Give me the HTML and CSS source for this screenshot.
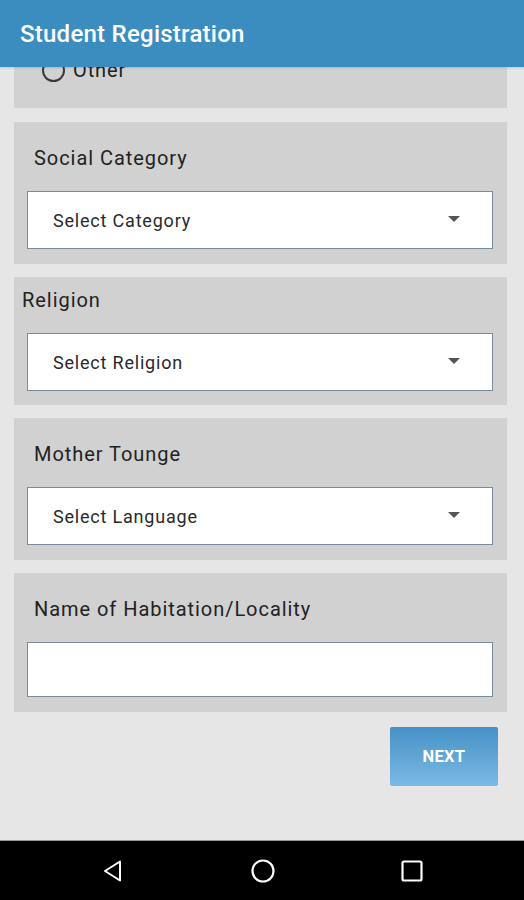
FILE: index.html
```html
<!DOCTYPE html>
<html lang="en">
<head>
  <meta charset="UTF-8">
  <meta name="viewport" content="width=device-width, initial-scale=1.0">
  <title>Student Registration</title>
  <link rel="stylesheet" href="styles.css">
</head>
<body>
  <div class="app">
    <header class="toolbar">
      <h1 class="toolbar-title">Student Registration</h1>
    </header>

    <main class="content">
      <!-- gender card, scrolled mostly out of view -->
      <div class="card card-scrolled">
        <label class="radio-row">
          <span class="radio"></span>
          <span class="radio-text">Other</span>
        </label>
      </div>

      <div class="card">
        <div class="field-label">Social Category</div>
        <div class="select">
          <span class="select-text">Select Category</span>
          <svg class="select-arrow" width="12" height="6" viewBox="0 0 12 6"><path d="M0 0h12L6 6z" fill="#555"/></svg>
        </div>
      </div>

      <div class="card card-tight">
        <div class="field-label label-flush">Religion</div>
        <div class="select">
          <span class="select-text">Select Religion</span>
          <svg class="select-arrow" width="12" height="6" viewBox="0 0 12 6"><path d="M0 0h12L6 6z" fill="#555"/></svg>
        </div>
      </div>

      <div class="card">
        <div class="field-label">Mother Tounge</div>
        <div class="select">
          <span class="select-text">Select Language</span>
          <svg class="select-arrow" width="12" height="6" viewBox="0 0 12 6"><path d="M0 0h12L6 6z" fill="#555"/></svg>
        </div>
      </div>

      <div class="card">
        <label class="field-label" for="locality">Name of Habitation/Locality</label>
        <input class="text-input" type="text" id="locality" name="locality">
      </div>

      <div class="actions">
        <button class="btn-next" type="button">NEXT</button>
      </div>
    </main>

    <nav class="navbar">
      <svg width="24" height="24" viewBox="0 0 24 24"><path d="M19 2.5v19L4 12z" fill="none" stroke="#fff" stroke-width="2" stroke-linejoin="round"/></svg>
      <svg width="26" height="26" viewBox="0 0 26 26"><circle cx="13" cy="13" r="10.5" fill="none" stroke="#fff" stroke-width="2.2"/></svg>
      <svg width="24" height="24" viewBox="0 0 24 24"><rect x="2.5" y="2.5" width="19" height="19" rx="1.5" fill="none" stroke="#fff" stroke-width="2.2"/></svg>
    </nav>
  </div>
</body>
</html>
```

FILE: styles.css
```css
/* Basic page setup */
html, body {
  margin: 0;
  padding: 0;
}
body {
  font-family: Roboto, "Liberation Sans", Arial, sans-serif;
  color: #212121;
  background: #e6e6e6;
}
.app {
  width: 524px;
  height: 900px;
  display: flex;
  flex-direction: column;
  overflow: hidden;
}

/* Top bar */
.toolbar {
  height: 67px;
  flex: none;
  background: #3c8dbf;
  display: flex;
  align-items: center;
  padding: 0 20px;
  position: relative;
  z-index: 2;
  box-shadow: 0 1px 2px rgba(0, 0, 0, 0.15);
}
.toolbar-title {
  margin: 0;
  color: #fff;
  font-size: 24px;
  font-weight: 500;
  letter-spacing: 0.25px;
}

/* Scrolling form */
.content {
  flex: 1;
  overflow: hidden;
  background: #e6e6e6;
  display: flex;
  flex-direction: column;
  gap: 13px;
}
.card {
  background: #d1d1d1;
  margin: 0 17px 0 14px;
  padding: 24px 14px 15px 13px;
  display: flex;
  flex-direction: column;
}
.card-scrolled {
  margin-top: -9px;
  margin-bottom: 1px;
  padding: 0 14px 26px 28px;
}
.card-tight {
  padding-top: 11px;
  padding-bottom: 14px;
}
.radio-row {
  display: flex;
  align-items: center;
  height: 24px;
  gap: 8px;
}
.radio {
  width: 19px;
  height: 19px;
  border: 2px solid #3a3a3a;
  border-radius: 50%;
}
.radio-text {
  font-size: 20px;
  letter-spacing: 0.9px;
  color: #222;
}
.field-label {
  display: block;
  font-size: 20px;
  line-height: 24px;
  letter-spacing: 0.95px;
  color: #222;
  margin: 0 0 21px 7px;
}
.label-flush {
  margin-left: -5px;
}

/* Spinner style dropdown */
.select {
  height: 58px;
  box-sizing: border-box;
  background: #fff;
  border: 1.5px solid #7b8c9e;
  display: flex;
  align-items: center;
  padding: 0 32px 0 25px;
}
.select-text {
  flex: 1;
  font-size: 18px;
  color: #2a2a2a;
  letter-spacing: 0.8px;
}
.select-arrow {
  flex: none;
  margin-top: -2px;
}
.text-input {
  height: 55px;
  box-sizing: border-box;
  width: 100%;
  margin: 0;
  border: 1.5px solid #7b8c9e;
  background: #fff;
  font: inherit;
  font-size: 18px;
  padding: 0 12px;
  outline: none;
}

/* Next button */
.actions {
  display: flex;
  justify-content: flex-end;
  padding: 2px 26px 0 0;
}
.btn-next {
  width: 108px;
  height: 59px;
  border: none;
  border-radius: 2px;
  background: linear-gradient(#4691c5, #7cb9e5);
  color: #fff;
  font-family: inherit;
  font-size: 16.5px;
  font-weight: 700;
  letter-spacing: 0.3px;
  cursor: pointer;
}

/* System navigation bar */
.navbar {
  height: 59px;
  flex: none;
  background: #000;
  border-top: 1px solid #9a9a9a;
  display: flex;
  align-items: center;
  justify-content: space-between;
  padding: 0 100px 0 101px;
}
```
